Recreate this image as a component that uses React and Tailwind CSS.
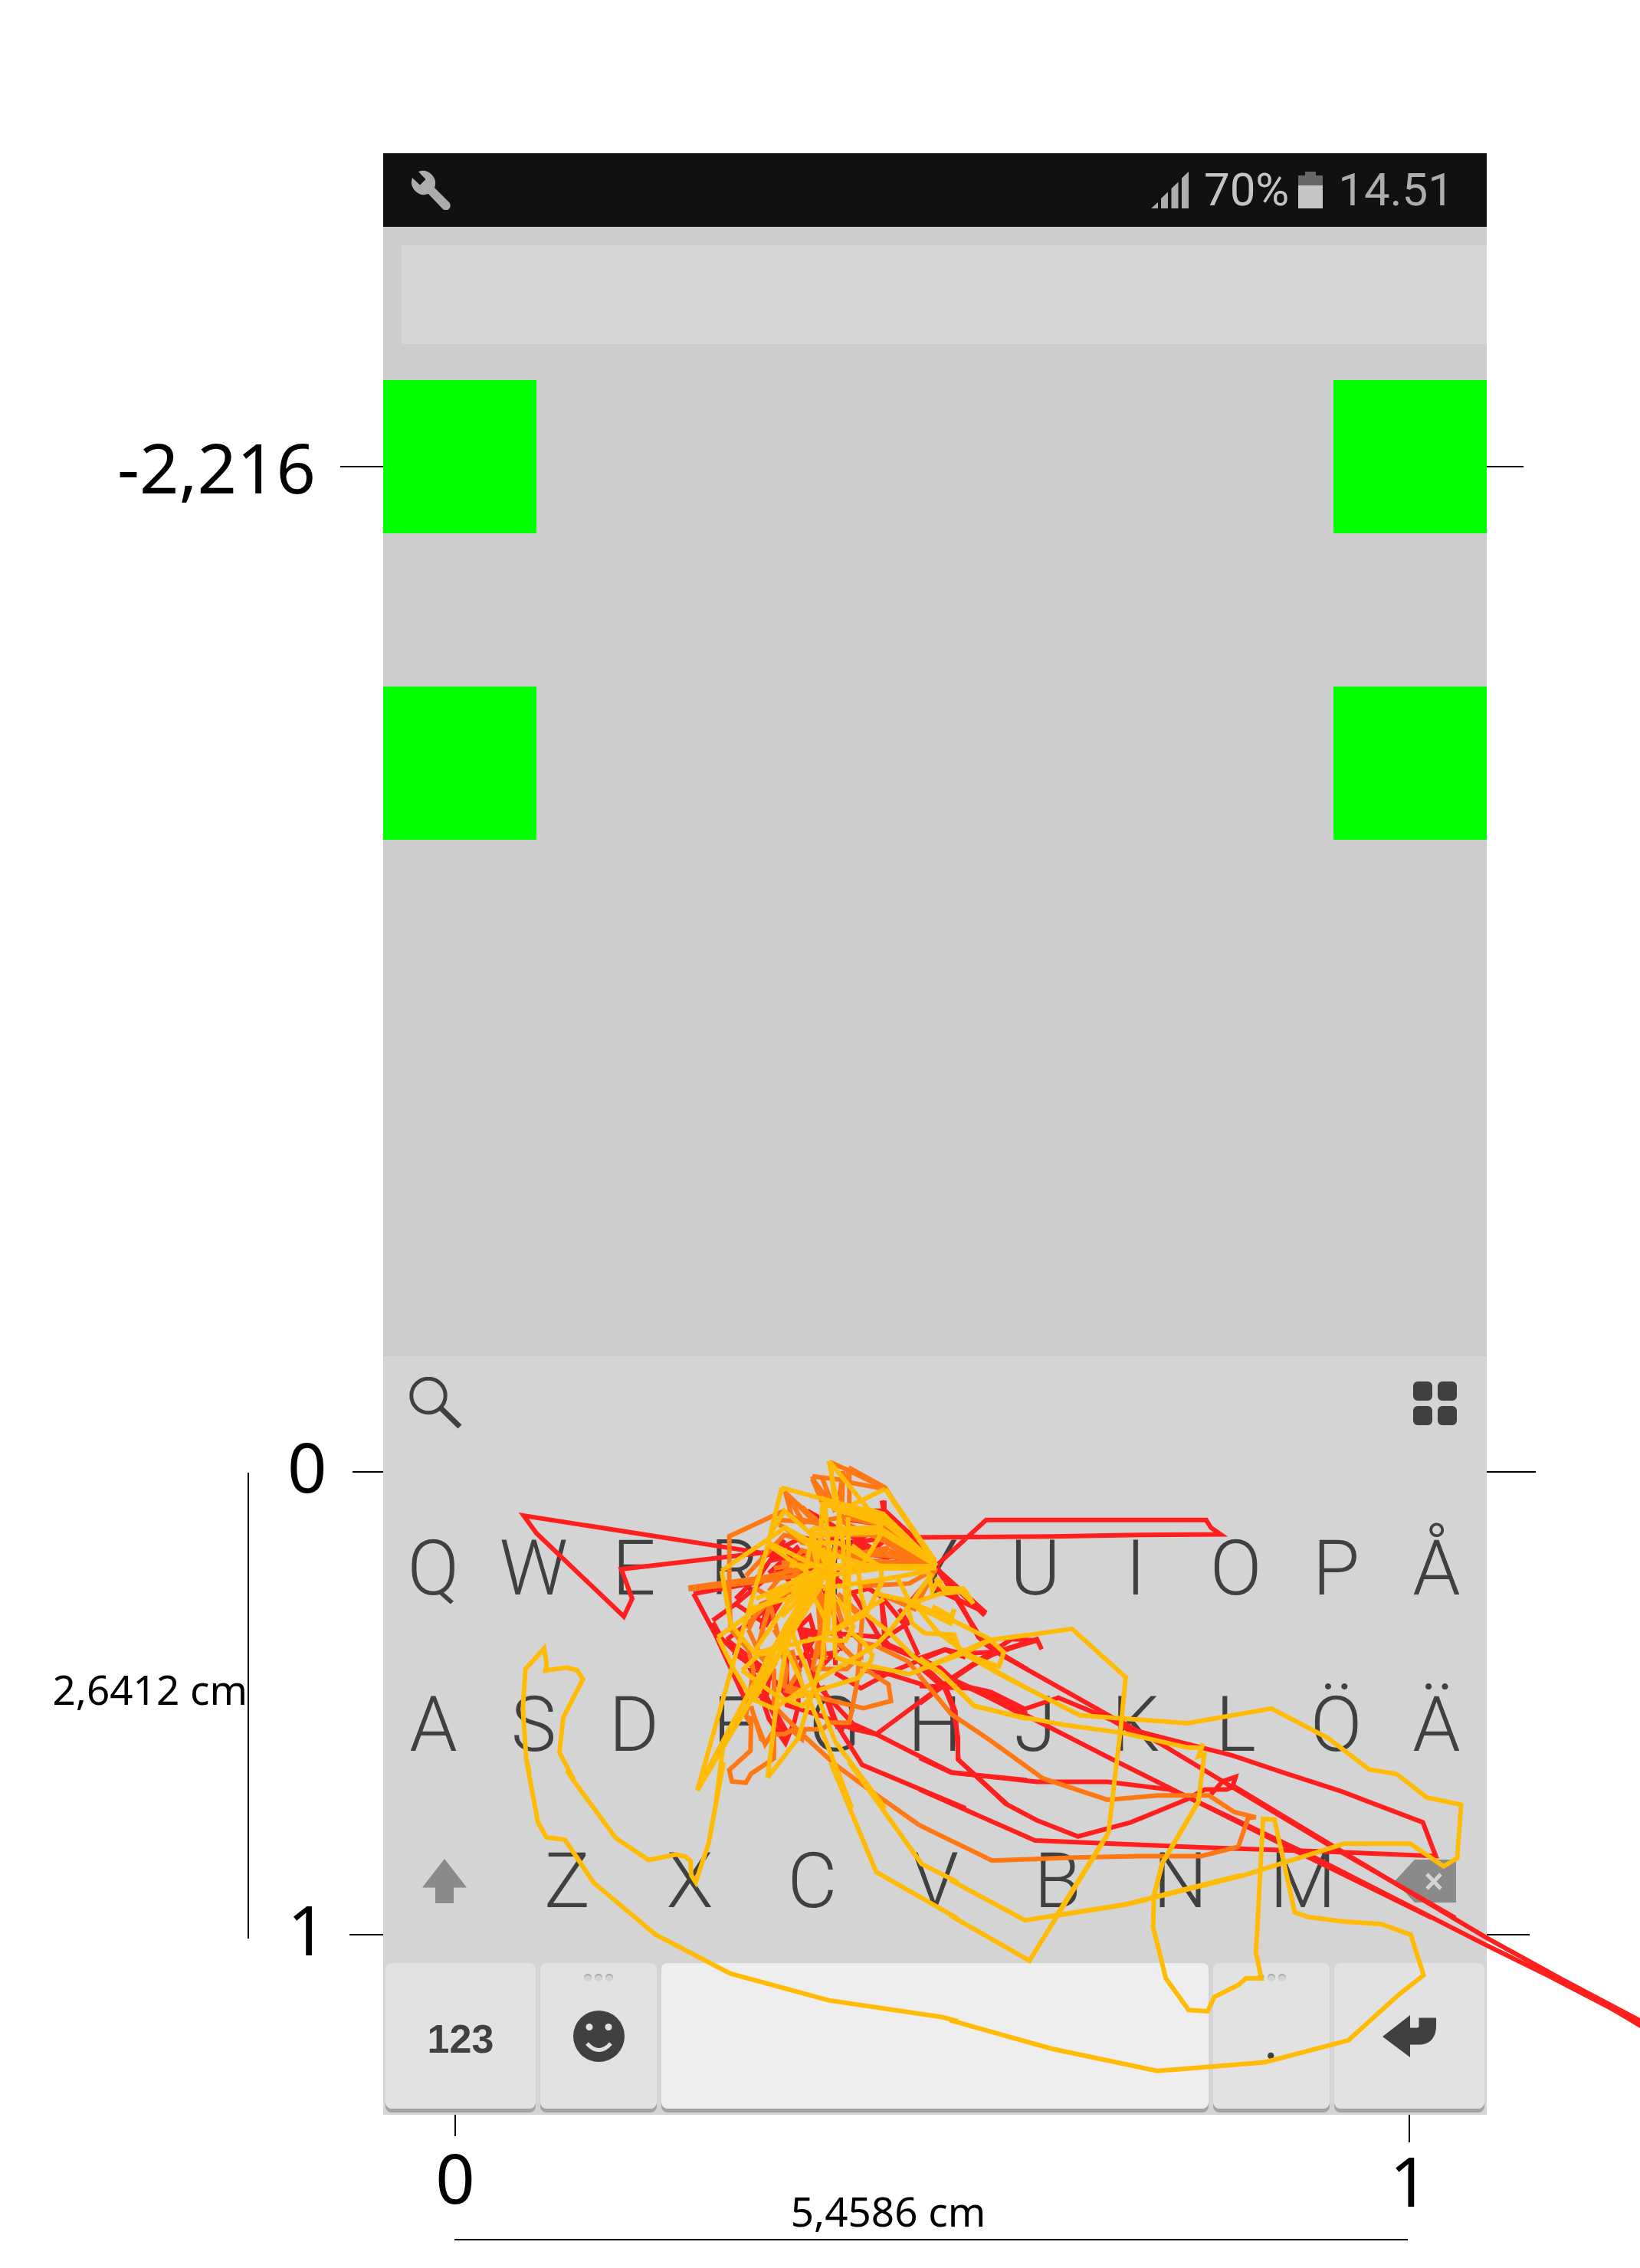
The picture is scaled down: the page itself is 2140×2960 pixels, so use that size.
const RED = "#ff1f1f";
const ORANGE = "#ff7814";
const YELLOW = "#ffbb05";

// Local coordinate frames in which the recorded strokes are stored.
const FRAMES = {
  core: "translate(860 1880) scale(0.3333 0.3333)",
  right: "translate(1200 1900) scale(0.5102 0.3827)",
  lowerRight: "translate(1240 2300) scale(0.574 0.4209)",
  lowerLeft: "translate(490 2300) scale(0.4847 0.4209)",
  left: "translate(490 1740) scale(0.3333 0.3827)",
};

const TRACES = [
  {
    color: RED,
    frame: "left",
    lines: ["1510,749 580,622 630,682 972,966 1005,905 962,805 1510,749"],
  },
  {
    color: RED,
    frame: "right",
    lines: [
      "-120,279 340,275 560,270 770,268 745,245 733,219 170,219 45,372",
      "45,380 100,500 165,640 210,680 490,890 620,985 800,1130 1050,1330 1370,1576",
      "85,765 265,880 500,1040 680,1160 950,1340 1310,1576",
      "490,890 560,940 800,1022 930,1080 1080,1145 1287,1250 1320,1365 1050,1350 730,1336 530,1325 295,1312 0,1138",
      "0,1030 80,1080 300,1112 480,1112 640,1138 690,1165 730,1138 785,1138 800,1130 808,1095 775,1110 745,1155",
      "690,1168 540,1250 405,1298 300,1243 225,1190 98,1035 98,960 85,860 65,795 0,720",
      "0,785 130,790 175,803 265,865 355,825 490,900 560,955",
      "130,790 265,885",
      "0,845 65,780 160,690 300,625 312,660",
      "85,755 235,625 300,630 200,668 110,675 65,660 0,690",
    ],
  },
  {
    color: RED,
    frame: "lowerRight",
    lines: [
      "640,70 870,260 1220,545 1400,680 1580,810",
      "540,108 820,290 1220,568 1350,655 1580,818",
      "1400,682 1580,820",
      "1440,712 1580,826",
    ],
  },
  {
    color: RED,
    frame: "core",
    lines: [
      "400,438 650,500 500,420",
      "135,600 220,760 330,1000 400,1000 430,1090 495,1185 530,1100 545,1040 545,900",
      "135,600 360,560 600,500",
      "212,712 240,765",
      "210,705 300,640 420,540 600,450",
      "300,640 420,720 520,560 460,500",
      "300,620 400,520 490,390 440,470 600,430",
      "265,780 330,830 420,900 500,1000 500,830",
      "265,780 420,660 400,740 460,620",
      "230,760 300,830 400,900 360,900 500,1140",
      "290,830 430,930 420,1010 495,1170",
      "495,1035 640,1080 760,1130 850,1150 1100,965 1230,880 1330,825 1440,790",
      "700,1110 850,1150 1145,1300 1440,1330",
      "850,1150 760,1110 620,960 550,740",
      "640,960 700,1120 795,1270 1200,1440",
      "650,1000 690,1110 720,1140",
      "690,910 790,970 900,910 1120,820 1200,850",
      "620,750 870,770 900,800 1100,890 1150,935 1440,1070",
      "755,590 880,800 1000,850 1120,960",
      "1120,960 1160,1060 1172,1250 1360,1425",
      "800,900 900,915 1060,965 1210,970 1300,985 1440,1055",
      "870,620 885,800",
      "870,610 960,720 1015,840",
      "940,660 975,715 890,770 870,610",
      "1085,500 1170,620 1250,770 1330,830 1440,895",
      "1085,500 1280,675 1100,590 1070,565",
      "1085,505 1275,685",
      "872,235 880,275 840,275 885,285 1030,410 1085,490",
      "882,235 882,275",
      "885,275 1040,420 1085,490",
      "580,275 900,460 700,420 1000,470 690,390",
      "740,310 880,330 760,400 900,380 820,440 1060,480",
      "500,900 500,1040 560,860 620,750 560,740 600,830 650,860",
      "690,540 720,560 740,600 820,580 870,610",
      "540,740 590,690 610,760 560,760",
      "640,570 700,720 720,820 690,780 690,880",
      "400,460 560,380 660,400 750,330",
      "430,520 540,420 620,520 700,500 690,570",
      "985,630 1060,540",
      "480,860 690,830 620,900",
    ],
  },
  {
    color: ORANGE,
    frame: "right",
    lines: [
      "0,750 80,880 180,970 315,1100 480,1173 610,1158 740,1158 805,1215 860,1233 840,1235 815,1333 720,1365 560,1365 400,1370 185,1380 0,1260",
    ],
  },
  {
    color: ORANGE,
    frame: "core",
    lines: [
      "115,582 400,552 650,510",
      "115,576 400,538 650,480",
      "490,275 275,375 275,600 280,740 350,820 370,900 340,1080 360,1110 358,1215 275,1290 285,1335 340,1340 360,1305 450,1245 450,1150",
      "340,1080 380,1100 415,1190 440,1150 490,1150 520,1135 560,1170 570,1130 640,1130 670,1105 745,1105 775,950 795,700 700,600",
      "360,1040 400,1170 425,1185",
      "450,1040 560,1150 690,1270 840,1380 1020,1507",
      "1020,920 975,865 840,800 780,790",
      "640,1010 800,1048 908,1020 898,955 800,890 690,780",
      "620,895 735,895 790,840",
      "600,140 725,155 750,110 885,185",
      "750,165 885,190",
      "600,140 650,270 600,150 670,240",
      "640,150 690,280",
      "720,150 700,260 720,120 715,300",
      "670,85 760,125 885,185 1085,490",
      "745,105 745,260",
      "735,115 880,185",
      "490,200 640,340 560,260",
      "495,205 520,300 640,330 530,240 620,330",
      "500,210 570,330",
      "340,530 490,370 600,400 470,330",
      "490,340 560,400 650,420",
      "450,310 600,320 720,300 870,330 1085,490",
      "730,285 880,310 1085,490",
      "700,310 850,380 1085,490 820,470 640,420",
      "640,440 880,450 1085,480 700,500",
      "600,370 860,370 1040,470 880,440 1085,490",
      "890,400 1000,465 1085,490",
      "900,430 1040,485 880,480",
      "860,600 1000,660 1085,500",
      "790,570 980,560 1085,500",
      "620,470 900,420 780,470 1000,480",
      "450,500 640,470 520,520 650,440 480,480",
      "430,590 560,430 620,450 560,500 640,380",
      "380,580 430,610 530,590 640,500",
      "350,740 400,640 520,590",
      "350,740 400,850 450,900 450,1040",
      "345,720 440,620 400,760",
      "430,620 450,700 500,900 490,960 560,980 640,1010",
      "450,740 550,900 500,980 570,1000",
      "600,900 640,700 620,500",
      "620,600 640,880 600,900",
      "630,650 650,860",
      "640,600 650,760 610,860",
      "680,600 720,720 790,790",
      "700,600 800,690",
      "690,780 760,850 800,850",
      "440,620 380,830 460,880",
      "520,820 560,960",
    ],
  },
  {
    color: YELLOW,
    frame: "core",
    lines: [
      "480,185 700,245 880,290 1085,490",
      "480,185 420,430 285,890 150,1370 370,1000 640,560",
      "150,1365 350,990 520,700 660,500",
      "220,1440 250,1200 370,1000 500,720 650,500",
      "370,1000 610,600",
      "885,190 1085,490",
      "885,190 750,255 640,250",
      "890,195 1080,470",
      "665,80 700,260 720,400 735,720",
      "665,80 820,270 885,290",
      "670,90 690,260",
      "245,510 495,340 600,420 850,500",
      "245,510 280,720 380,840 440,830",
      "430,410 560,500 640,560",
      "440,360 490,275 600,370 650,480",
      "430,400 650,510",
      "230,770 370,670 500,590 650,500",
      "230,770 290,890 360,1010 450,1050 600,950 850,800 900,750 985,640 1070,520",
      "325,900 400,830 480,800 640,500",
      "325,900 460,1000 560,1040 600,1000",
      "425,1320 545,1165 590,1020 640,850 665,500",
      "425,1320 460,1030 500,800 600,560",
      "755,1440 670,1220 590,1020 500,820",
      "885,1440 690,1180 600,950 520,750",
      "810,680 900,750 1000,850 1100,910 1235,1040 1440,1090",
      "690,850 740,865 980,915 1120,860 1200,830 1300,780 1440,762",
      "985,640 1100,600 1200,590 1230,640",
      "1110,578 1190,580 1228,635 1180,590",
      "980,640 1070,680 1140,715 1155,660",
      "1070,650 1145,690",
      "1000,640 1150,705 1290,775 1350,830 1330,885 1180,830 1155,760 1040,755 990,715 975,660",
      "1010,650 1090,750 1200,830 1340,915 1440,970",
      "1100,760 1150,770 1190,840",
      "740,740 800,790 835,840 830,860 780,930 600,985 480,1020",
      "380,830 430,820 640,770 810,680",
      "680,745 880,620",
      "600,345 870,350 1085,490",
      "590,350 860,340 1080,480",
      "600,370 880,360 1085,490",
      "640,250 880,300 1085,490",
      "680,250 900,320 1080,485",
      "680,265 880,330",
      "700,270 880,320 1080,480",
      "870,360 1070,480",
      "880,350 800,480",
      "510,490 1085,492",
      "640,500 1085,500",
      "650,530 880,500 1085,498",
      "640,580 900,540 1060,510",
      "1050,500 1070,590 1090,550 1120,590",
      "1080,540 1110,560",
      "780,500 790,600 815,690",
      "755,410 880,510",
      "690,850 680,500 710,260",
      "640,240 630,400 600,600",
      "650,250 670,500 660,760",
      "600,350 580,480 560,600",
      "930,530 985,640",
      "880,540 850,600 985,630",
      "870,500 870,560 810,680",
      "655,780 730,785 760,730 700,620",
      "350,660 500,620 640,560",
      "420,620 560,530 680,500",
      "520,600 600,540 690,510",
      "380,620 640,500 700,440",
      "540,700 640,540",
      "480,690 620,550 690,520",
      "590,610 660,500 640,420",
      "600,600 660,720 690,480",
      "560,560 620,500 600,400",
      "740,300 745,700",
      "490,340 600,400 700,400 880,500",
      "370,830 500,640 660,500",
      "400,960 540,720 620,580",
      "360,1000 420,860 560,620",
      "370,1020 470,840",
    ],
  },
  {
    color: YELLOW,
    frame: "right",
    lines: [
      "0,730 105,670 175,630 390,590 527,755 515,920 483,1285 350,1568",
      "0,690 55,740 140,853 240,885 370,918 520,945 685,995 720,995 725,982 713,1025 728,1018 713,1180 620,1390 600,1500",
      "100,665 205,745 410,885 685,912 900,862 1045,963 1150,1070 1220,1085 1297,1165 1385,1190 1375,1372 1340,1400 1255,1323 1085,1323 830,1430 530,1530 330,1572",
    ],
  },
  {
    color: YELLOW,
    frame: "lowerRight",
    lines: [
      "0,365 170,490 400,440 660,350",
      "0,475 180,615 355,230",
      "565,120 483,310 463,410 461,510 490,670 542,768 585,772 600,728 655,690 672,670 707,670 695,590 711,175 737,178 783,465 815,480 890,493 980,502 1047,535 1076,660 1020,720 905,862 715,930 470,957 230,888 0,800",
    ],
  },
  {
    color: YELLOW,
    frame: "left",
    lines: [
      "775,1520 720,1430 735,1310 812,1180 790,1150 750,1140 665,1150 670,1130 660,1075 587,1145 577,1280 590,1450 603,1500",
    ],
  },
  {
    color: YELLOW,
    frame: "lowerLeft",
    lines: [
      "1225,0 1348,340 1568,485",
      "1275,0 1470,315 1568,372",
      "407,0 437,185 460,233 510,240 587,373 755,535 955,655 1220,738 1525,790 1568,803",
      "515,24 530,52 647,235 735,303 810,286 835,293 848,305 850,350 862,372 897,250 937,0",
    ],
  },
];

function TraceOverlay() {
  return (
    <svg
      className="pointer-events-none absolute left-0 top-0 w-full"
      viewBox="0 0 2140 2960"
      fill="none"
      strokeWidth="6"
      aria-hidden="true"
    >
      {TRACES.map((trace, i) => (
        <g key={i} transform={FRAMES[trace.frame]} stroke={trace.color}>
          {trace.lines.map((points, j) => (
            <polyline key={j} points={points} vectorEffect="non-scaling-stroke" />
          ))}
        </g>
      ))}
    </svg>
  );
}

function StatusBar() {
  return (
    <header className="flex h-24 items-center justify-between bg-[#111111] pl-9 pr-[43px] font-[Roboto,sans-serif] text-[60px] leading-none text-[#adadad]">
      <svg className="h-[52px] w-[52px]" viewBox="0 0 52 52" fill="#adadad" aria-hidden="true">
        <path d="M10 2A16.4 16.4 0 0 1 31 23L50 42A6 6 0 0 1 41.5 50.5L23 31A16.4 16.4 0 0 1 2 10L12 19.5L19.5 12Z" />
      </svg>
      <div className="flex items-center">
        <svg className="h-12 w-[49px]" viewBox="0 0 49 48" fill="#adadad" aria-hidden="true">
          <path d="M0 48L9 40V48ZM13 48V35L22 26.500V48ZM26.500 48V22L35.500 13.500V48ZM40 48V8.500L49 0V48Z" />
        </svg>
        <span className="ml-5 text-[#c4c4c4]">70%</span>
        <svg className="ml-3 h-12 w-8" viewBox="0 0 32 48" aria-hidden="true">
          <path d="M0 5H9V0H23V5H32V18H0Z" fill="#666666" />
          <path d="M0 18H32V48H0Z" fill="#c6c6c6" />
        </svg>
        <span className="ml-5">14.51</span>
      </div>
    </header>
  );
}

function TargetRow() {
  return (
    <div className="flex justify-between">
      <div className="size-[200px] bg-[#00ff00]" />
      <div className="size-[200px] bg-[#00ff00]" />
    </div>
  );
}

function LetterKey({ letter }) {
  return (
    <button type="button" className="flex h-[204px] flex-1 items-center justify-center">
      {letter}
    </button>
  );
}

function LongPressDots() {
  return (
    <span className="absolute inset-x-0 top-3.5 flex justify-center gap-1">
      <i className="size-2.5 rounded-full bg-[#d3d3d3] shadow-[inset_0_2px_1px_#a8a8a8]" />
      <i className="size-2.5 rounded-full bg-[#d3d3d3] shadow-[inset_0_2px_1px_#a8a8a8]" />
      <i className="size-2.5 rounded-full bg-[#d3d3d3] shadow-[inset_0_2px_1px_#a8a8a8]" />
    </span>
  );
}

function BottomKey({ label, tone = "bg-[#e2e2e2]", children }) {
  return (
    <button
      type="button"
      aria-label={label}
      className={`relative flex h-[190px] items-center justify-center rounded-lg shadow-[0_5px_0_#a2a2a2] ${tone}`}
    >
      {children}
    </button>
  );
}

function Keyboard() {
  return (
    <section className="bg-[#d4d4d4] font-[Roboto,sans-serif] text-[100px] font-light leading-none text-[#404040]">
      <div className="mb-[53px] flex h-[122px] items-center justify-between pl-[34px] pr-[39px]">
        <button type="button" aria-label="Search">
          <svg className="h-[68px] w-[69px]" viewBox="0 0 69 68" fill="none" stroke="#404040" aria-hidden="true">
            <circle cx="25" cy="24.500" r="22.200" strokeWidth="5" />
            <path d="M40.500 40L66 65" strokeWidth="7" />
          </svg>
        </button>
        <button type="button" aria-label="Menu" className="grid grid-cols-2 gap-[7px]">
          <i className="size-[25px] rounded-md bg-[#404040]" />
          <i className="size-[25px] rounded-md bg-[#404040]" />
          <i className="size-[25px] rounded-md bg-[#404040]" />
          <i className="size-[25px] rounded-md bg-[#404040]" />
        </button>
      </div>

      <div className="flex">
        {[..."QWERTYUIOPÅ"].map((c) => <LetterKey key={c} letter={c} />)}
      </div>
      <div className="flex">
        {[..."ASDFGHJKLÖÄ"].map((c) => <LetterKey key={c} letter={c} />)}
      </div>
      <div className="flex">
        <button type="button" aria-label="Shift" className="flex flex-1 items-center justify-center">
          <svg className="h-[58px] w-[58px]" viewBox="0 0 58 58" fill="#8a8a8a" aria-hidden="true">
            <path d="M29 0L58 37.500H41V58H17V37.500H0Z" />
          </svg>
        </button>
        {[..."ZXCVBNM"].map((c) => <LetterKey key={c} letter={c} />)}
        <button type="button" aria-label="Delete" className="flex flex-1 items-center justify-center">
          <svg className="h-14 w-20" viewBox="0 0 80 56" aria-hidden="true">
            <path d="M0 28L26 0H80V56H26Z" fill="#8a8a8a" />
            <path d="M42 19L60 38M60 19L42 38" stroke="#d4d4d4" strokeWidth="5" />
          </svg>
        </button>
      </div>

      <div className="grid grid-cols-[196fr_152fr_714fr_152fr_196fr] gap-1.5 px-[3px] pb-2 pt-[5px]">
        <BottomKey>
          <span className="pt-2 font-['Liberation_Sans',Arial,sans-serif] text-[52px] font-bold leading-none">123</span>
        </BottomKey>
        <BottomKey label="Emoji">
          <LongPressDots />
          <svg className="size-[67px]" viewBox="0 0 67 67" aria-hidden="true">
            <circle cx="33.500" cy="33.500" r="33.500" fill="#404040" />
            <circle cx="21" cy="21.500" r="4.500" fill="#e2e2e2" />
            <circle cx="46" cy="21.500" r="4.500" fill="#e2e2e2" />
            <path d="M18 43Q33.500 60 49 43" fill="none" stroke="#e2e2e2" strokeWidth="5" />
          </svg>
        </BottomKey>
        <BottomKey label="Space" tone="bg-[#eeeeee]" />
        <BottomKey>
          <LongPressDots />
          <span className="pb-2">.</span>
        </BottomKey>
        <BottomKey label="Enter">
          <svg className="h-[55px] w-[70px]" viewBox="0 0 70 55" fill="#404040" aria-hidden="true">
            <path d="M0 28L36 0V16.500H45Q47.500 16.500 47.500 14V3.500H70V14C70 29 62 38.500 48 38.500H36V55Z" />
          </svg>
        </BottomKey>
      </div>
    </section>
  );
}

export default function App() {
  return (
    <div className="relative overflow-hidden bg-white pb-9 pt-[200px] font-['Noto_Sans',sans-serif] text-[90px] leading-none text-black">
      <main className="grid grid-cols-[500px_1fr_200px]">
        <div className="flex items-center justify-end gap-8 self-start pt-[364px]">
          <span>-2,216</span>
          <i className="h-0.5 w-14 bg-black" />
        </div>
        <section className="bg-[#cccccc] pb-[674px]">
          <StatusBar />
          <input
            aria-label="Text entry"
            className="mb-[47px] ml-6 mt-6 block h-[129px] w-[calc(100%-24px)] bg-[#d6d6d6] px-6 text-[60px] outline-none"
          />
          <div className="flex flex-col gap-[200px]">
            <TargetRow />
            <TargetRow />
          </div>
        </section>
        <div className="pt-[408px]">
          <i className="block h-0.5 w-12 bg-black" />
        </div>

        <div className="flex items-start justify-end">
          <span className="mt-[408px] text-[53px] leading-none">2,6412 cm</span>
          <i className="mt-[152px] h-[608px] w-0.5 bg-black" />
          <div className="mt-[107px] flex h-[692px] w-[175px] flex-col justify-between pl-[50px]">
            <div className="flex h-[88px] items-center justify-between">
              <span className="pb-4">0</span>
              <i className="h-0.5 w-10 bg-black" />
            </div>
            <div className="flex h-[88px] items-center justify-between">
              <span className="pb-4">1</span>
              <i className="h-0.5 w-11 bg-black" />
            </div>
          </div>
        </div>
        <Keyboard />
        <div className="pt-[150px]">
          <i className="block h-0.5 w-16 bg-black" />
          <i className="mt-[602px] block h-0.5 w-14 bg-black" />
        </div>

        <div className="col-start-2">
          <div className="grid grid-cols-[188px_1fr_202px]">
            <div className="flex flex-col items-center">
              <i className="h-7 w-0.5 bg-black" />
              <span className="mt-2">0</span>
            </div>
            <span className="self-end pb-2.5 pr-[108px] text-center text-[53px] leading-none">5,4586 cm</span>
            <div className="flex flex-col items-center">
              <i className="h-9 w-0.5 bg-black" />
              <span className="mb-8 mt-1">1</span>
            </div>
          </div>
          <i className="ml-[93px] mr-[103px] block h-0.5 bg-black" />
        </div>
      </main>
      <TraceOverlay />
    </div>
  );
}
